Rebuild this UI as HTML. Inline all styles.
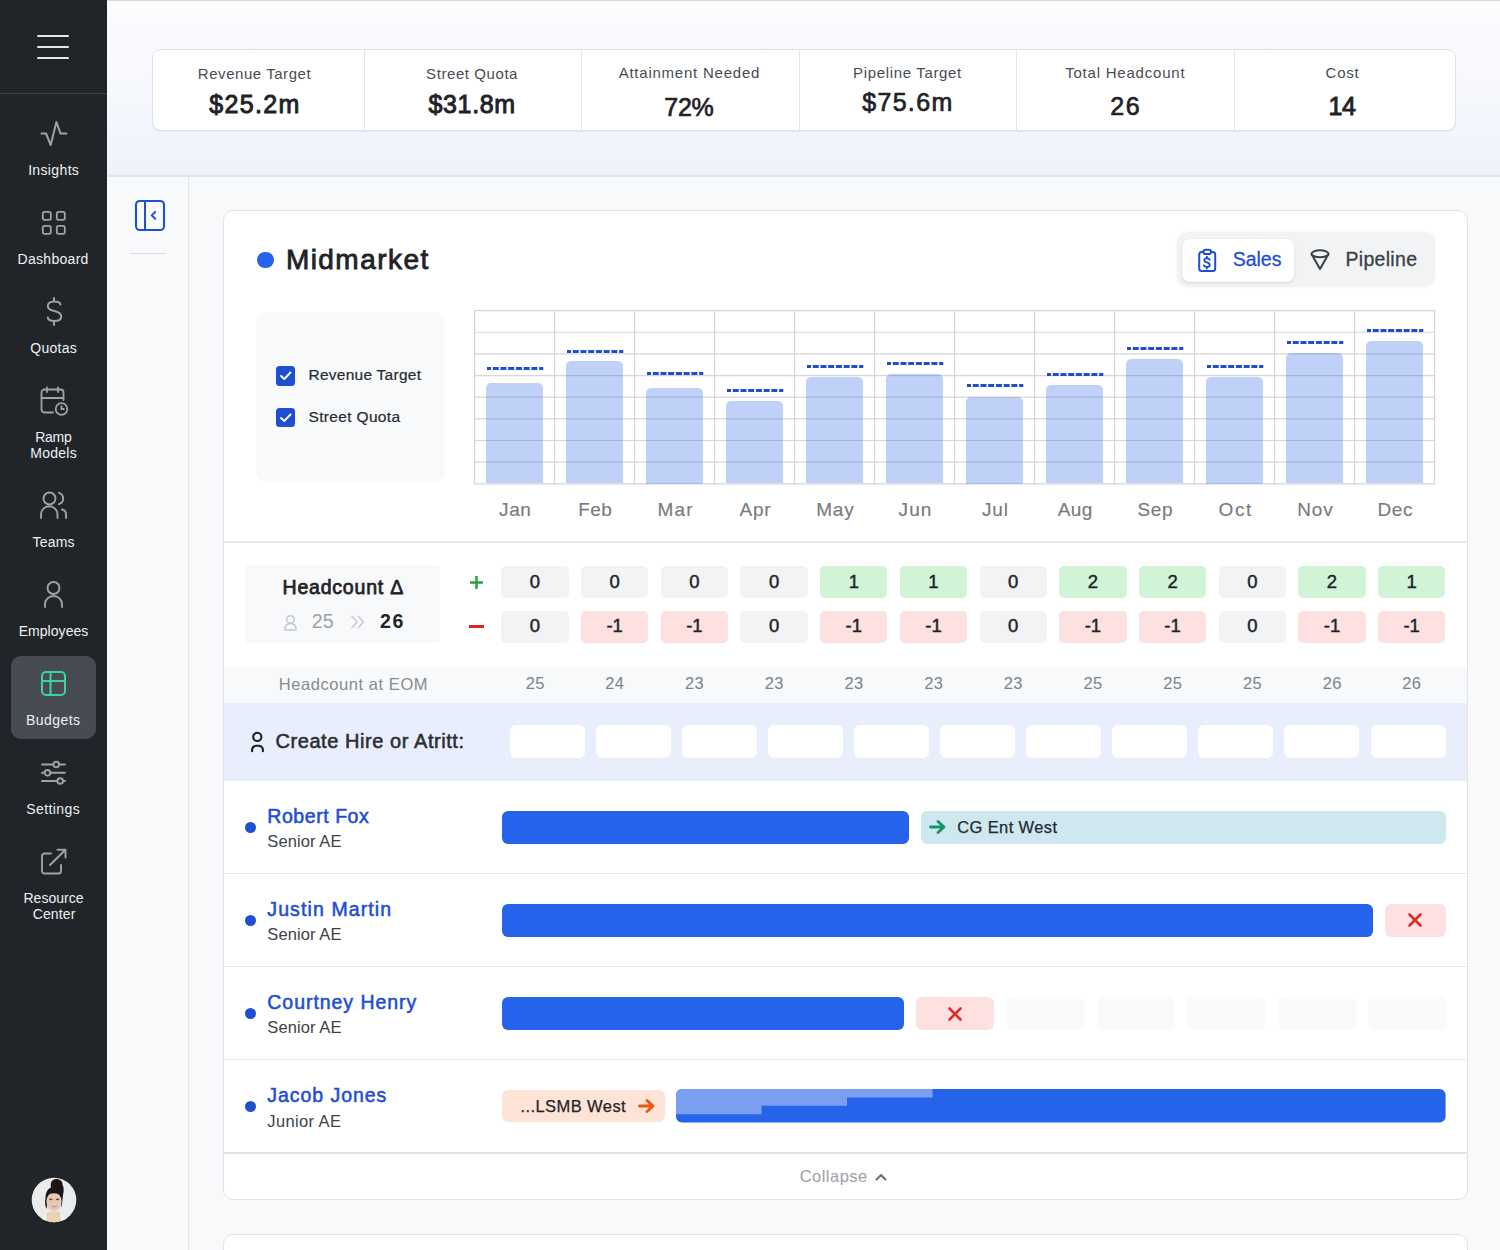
<!DOCTYPE html>
<html><head><meta charset="utf-8"><title>Budgets</title>
<style>
html,body{margin:0;padding:0;}
body{width:1500px;height:1250px;overflow:hidden;position:relative;background:#f8f9fa;font-family:"Liberation Sans",sans-serif;}
.t{position:absolute;line-height:1;white-space:nowrap;}
.r{position:absolute;}
.s{position:absolute;overflow:visible;}
</style></head><body>
<div class="r" style="left:0px;top:0px;width:107px;height:1250px;background:#212529;border-radius:0px;"></div>
<div class="r" style="left:0px;top:93px;width:107px;height:1px;background:#3a3f45;border-radius:0px;"></div>
<div class="r" style="left:37px;top:35px;width:32px;height:2.2px;background:#e4e6e8;border-radius:1px;"></div>
<div class="r" style="left:37px;top:46px;width:32px;height:2.2px;background:#e4e6e8;border-radius:1px;"></div>
<div class="r" style="left:37px;top:57px;width:32px;height:2.2px;background:#e4e6e8;border-radius:1px;"></div>
<svg class="s" style="left:39.5px;top:121px;" width="28" height="25" viewBox="0 0 28 25"><polyline points="1.5,12.5 6,12.5 10.7,24 16.4,1 20.5,12.5 26.5,12.5" fill="none" stroke="#9ea3a8" stroke-width="2" stroke-linejoin="round" stroke-linecap="round"/></svg>
<div class="t" style="left:-246.32px;width:600px;text-align:center;top:163.15px;font-size:14px;color:#eef0f2;letter-spacing:0.357px;">Insights</div>
<svg class="s" style="left:40.5px;top:209.5px;" width="26" height="26" viewBox="0 0 26 26"><rect x="1.8" y="1.8" width="8" height="8" rx="1.8" fill="none" stroke="#9ea3a8" stroke-width="1.8"/><rect x="1.8" y="15.8" width="8" height="8" rx="1.8" fill="none" stroke="#9ea3a8" stroke-width="1.8"/><rect x="15.8" y="1.8" width="8" height="8" rx="1.8" fill="none" stroke="#9ea3a8" stroke-width="1.8"/><rect x="15.8" y="15.8" width="8" height="8" rx="1.8" fill="none" stroke="#9ea3a8" stroke-width="1.8"/></svg>
<div class="t" style="left:-246.86px;width:600px;text-align:center;top:252.15px;font-size:14px;color:#eef0f2;letter-spacing:0.287px;">Dashboard</div>
<svg class="s" style="left:45.5px;top:296.5px;" width="17" height="29" viewBox="0 0 17 29"><path d="M8 1 V4.5 M8 24.2 V28 M14.5 7.5 C14 5 11.5 4.5 8.2 4.5 C4 4.5 1.8 6.5 1.8 9 C1.8 12.2 4.8 13.3 8.2 14 C12 14.8 15.2 16 15.2 19.5 C15.2 22.5 12.3 24 8.2 24 C4.8 24 2.2 23 1.8 20.5" fill="none" stroke="#9ea3a8" stroke-width="2" stroke-linecap="round"/></svg>
<div class="t" style="left:-246.36px;width:600px;text-align:center;top:340.65px;font-size:14px;color:#eef0f2;letter-spacing:0.28px;">Quotas</div>
<svg class="s" style="left:39.5px;top:386.5px;" width="30" height="30" viewBox="0 0 30 30"><path d="M13 25.5 H4.5 A3 3 0 0 1 1.5 22.5 V5.5 A3 3 0 0 1 4.5 2.5 H20.5 A3 3 0 0 1 23.5 5.5 V13" fill="none" stroke="#9ea3a8" stroke-width="1.8" stroke-linecap="round"/><path d="M1.5 11 H23.5 M7 0.5 V5 M18 0.5 V5" fill="none" stroke="#9ea3a8" stroke-width="1.8" stroke-linecap="round"/><circle cx="21.5" cy="22" r="5.8" fill="none" stroke="#9ea3a8" stroke-width="1.8"/><path d="M21.5 18.5 V22 H24.5" fill="none" stroke="#9ea3a8" stroke-width="1.8"/></svg>
<div class="t" style="left:-246.60px;width:600px;text-align:center;top:429.65px;font-size:14px;color:#eef0f2;letter-spacing:-0.2px;">Ramp</div>
<div class="t" style="left:-246.36px;width:600px;text-align:center;top:446.15px;font-size:14px;color:#eef0f2;letter-spacing:0.28px;">Models</div>
<svg class="s" style="left:40px;top:491px;" width="28" height="28" viewBox="0 0 28 28"><circle cx="9.5" cy="7.5" r="6" fill="none" stroke="#9ea3a8" stroke-width="1.9"/><path d="M19 1.8 A6 6 0 0 1 19 13.2" fill="none" stroke="#9ea3a8" stroke-width="1.9" stroke-linecap="round"/><path d="M1 27 V23.5 A8 8 0 0 1 17.5 23.5 V27" fill="none" stroke="#9ea3a8" stroke-width="1.9" stroke-linecap="round"/><path d="M22 18.5 A5 5 0 0 1 26 23.5 V27" fill="none" stroke="#9ea3a8" stroke-width="1.9" stroke-linecap="round"/></svg>
<div class="t" style="left:-246.41px;width:600px;text-align:center;top:535.15px;font-size:14px;color:#eef0f2;letter-spacing:0.175px;">Teams</div>
<svg class="s" style="left:43.5px;top:580.5px;" width="20" height="28" viewBox="0 0 20 28"><circle cx="9.5" cy="7" r="6" fill="none" stroke="#9ea3a8" stroke-width="1.9"/><path d="M1 26 V23 A8.5 8 0 0 1 18 23 V26" fill="none" stroke="#9ea3a8" stroke-width="1.9" stroke-linecap="round"/></svg>
<div class="t" style="left:-246.47px;width:600px;text-align:center;top:624.15px;font-size:14px;color:#eef0f2;letter-spacing:0.05px;">Employees</div>
<div class="r" style="left:11px;top:655.5px;width:85px;height:83.5px;background:#474c54;border-radius:10px;"></div>
<svg class="s" style="left:40.5px;top:670.5px;" width="25" height="25" viewBox="0 0 25 25"><rect x="1" y="1" width="23" height="23" rx="4" fill="none" stroke="#3dd39b" stroke-width="2"/><path d="M1 10 H24 M9.5 1 V24" fill="none" stroke="#3dd39b" stroke-width="2"/></svg>
<div class="t" style="left:-246.79px;width:600px;text-align:center;top:713.15px;font-size:14px;color:#eef0f2;letter-spacing:0.417px;">Budgets</div>
<svg class="s" style="left:41px;top:760.5px;" width="25" height="24" viewBox="0 0 25 24"><path d="M1 3.5 H24 M1 11.8 H24 M1 20 H24" stroke="#9ea3a8" stroke-width="1.9" stroke-linecap="round"/><circle cx="15.2" cy="3.5" r="2.8" fill="#212529" stroke="#9ea3a8" stroke-width="1.9"/><circle cx="6.5" cy="11.8" r="2.8" fill="#212529" stroke="#9ea3a8" stroke-width="1.9"/><circle cx="19.2" cy="20" r="2.8" fill="#212529" stroke="#9ea3a8" stroke-width="1.9"/></svg>
<div class="t" style="left:-246.81px;width:600px;text-align:center;top:801.65px;font-size:14px;color:#eef0f2;letter-spacing:0.386px;">Settings</div>
<svg class="s" style="left:40.5px;top:848.5px;" width="26" height="26" viewBox="0 0 26 26"><path d="M10 4.5 H3.5 A2.5 2.5 0 0 0 1 7 V22 A2.5 2.5 0 0 0 3.5 24.5 H17.5 A2.5 2.5 0 0 0 20 22 V16" fill="none" stroke="#9ea3a8" stroke-width="1.9" stroke-linecap="round"/><path d="M9 16 L24.5 0.8 M16.5 0.8 H24.5 V8.5" fill="none" stroke="#9ea3a8" stroke-width="1.9" stroke-linecap="round" stroke-linejoin="round"/></svg>
<div class="t" style="left:-246.49px;width:600px;text-align:center;top:891.15px;font-size:14px;color:#eef0f2;letter-spacing:0.029px;">Resource</div>
<div class="t" style="left:-245.94px;width:600px;text-align:center;top:907.15px;font-size:14px;color:#eef0f2;letter-spacing:0.12px;">Center</div>
<svg class="s" style="left:30.8px;top:1177.2px;" width="46" height="46" viewBox="0 0 46 46"><defs><clipPath id="av"><circle cx="23" cy="23" r="22.3"/></clipPath><filter id="bl" x="-10%" y="-10%" width="120%" height="120%"><feGaussianBlur stdDeviation="0.55"/></filter></defs><g clip-path="url(#av)"><rect width="46" height="46" fill="#eaebed"/><g filter="url(#bl)"><path d="M8 46 C10 40 15 37 23 37 C31 37 37 40 39 46 Z" fill="#f3f3f4"/><path d="M15 46 L15.5 36 C18 33.5 27 33.5 29.5 36 L30 46 Z" fill="#ecd2b4"/><path d="M14.5 24 C14 17 16 12 20 10.5 C19 6 21 2 25 2 C29 2 32 4.5 31.5 8 C33 10 33 14 32 18 C31.5 22 31 27 30.5 31 L29.5 22 C28 17 18 17 16.5 22 L15.5 31 C15 29 14.5 27 14.5 24 Z" fill="#1a1718"/><path d="M14 23 C14 27 14.5 30 15.5 32 L17 24 Z" fill="#2a2626"/><ellipse cx="23" cy="24.6" rx="7.6" ry="9.3" fill="#e6c8b4"/><path d="M15.5 19 C17 14.5 20 13.5 23 13.5 C27 13.5 30 15 30.8 19.5 C29 17 26 16.3 23 16.3 C20 16.3 17 17 15.5 19 Z" fill="#1a1718"/><ellipse cx="19.8" cy="22.3" rx="1.7" ry="0.9" fill="#6b4a3a"/><ellipse cx="26.6" cy="22.3" rx="1.7" ry="0.9" fill="#6b4a3a"/><path d="M20.5 29 C22 30 25 30 26.5 29" fill="none" stroke="#b98470" stroke-width="0.9"/></g></g></svg>
<div class="r" style="left:107px;top:0px;width:1393px;height:1250px;background:#f8f9fa;border-radius:0px;"></div>
<div class="r" style="left:107px;top:0px;width:1393px;height:175px;background:linear-gradient(180deg,#fcfcfe 0%,#f7f9fd 45%,#eef2fb 100%);border-radius:0px;"></div>
<div class="r" style="left:107px;top:0px;width:1393px;height:1px;background:#d9dbdd;border-radius:0px;"></div>
<div class="r" style="left:107px;top:175px;width:1393px;height:1.5px;background:#e2e6ee;border-radius:0px;"></div>
<div class="r" style="left:152px;top:49px;width:1304px;height:82px;background:#fff;border-radius:9px;border:1px solid #dfe1e5;box-sizing:border-box;box-shadow:0 1px 2px rgba(0,0,0,0.05);"></div>
<div class="r" style="left:364px;top:50px;width:1px;height:80px;background:#e3e5e8;border-radius:0px;"></div>
<div class="r" style="left:581px;top:50px;width:1px;height:80px;background:#e3e5e8;border-radius:0px;"></div>
<div class="r" style="left:799px;top:50px;width:1px;height:80px;background:#e3e5e8;border-radius:0px;"></div>
<div class="r" style="left:1016px;top:50px;width:1px;height:80px;background:#e3e5e8;border-radius:0px;"></div>
<div class="r" style="left:1234px;top:50px;width:1px;height:80px;background:#e3e5e8;border-radius:0px;"></div>
<div class="t" style="left:-45.53px;width:600px;text-align:center;top:65.70px;font-size:15px;color:#474c52;letter-spacing:0.546px;">Revenue Target</div>
<div class="t" style="left:-45.14px;width:600px;text-align:center;top:91.64px;font-size:25px;color:#1f2328;letter-spacing:1.32px;-webkit-text-stroke:0.95px #1f2328;">$25.2m</div>
<div class="t" style="left:172.09px;width:600px;text-align:center;top:65.70px;font-size:15px;color:#474c52;letter-spacing:0.573px;">Street Quota</div>
<div class="t" style="left:172.14px;width:600px;text-align:center;top:92.14px;font-size:25px;color:#1f2328;letter-spacing:0.68px;-webkit-text-stroke:0.95px #1f2328;">$31.8m</div>
<div class="t" style="left:389.38px;width:600px;text-align:center;top:64.90px;font-size:15px;color:#474c52;letter-spacing:0.769px;">Attainment Needed</div>
<div class="t" style="left:388.90px;width:600px;text-align:center;top:94.64px;font-size:25px;color:#1f2328;letter-spacing:-0.2px;-webkit-text-stroke:0.7px #1f2328;">72%</div>
<div class="t" style="left:607.53px;width:600px;text-align:center;top:64.70px;font-size:15px;color:#474c52;letter-spacing:0.657px;">Pipeline Target</div>
<div class="t" style="left:607.87px;width:600px;text-align:center;top:90.34px;font-size:25px;color:#1f2328;letter-spacing:1.34px;-webkit-text-stroke:0.7px #1f2328;">$75.6m</div>
<div class="t" style="left:825.29px;width:600px;text-align:center;top:64.70px;font-size:15px;color:#474c52;letter-spacing:0.786px;">Total Headcount</div>
<div class="t" style="left:825.70px;width:600px;text-align:center;top:93.94px;font-size:25px;color:#1f2328;letter-spacing:1.6px;-webkit-text-stroke:0.7px #1f2328;">26</div>
<div class="t" style="left:1042.58px;width:600px;text-align:center;top:64.90px;font-size:15px;color:#474c52;letter-spacing:0.767px;">Cost</div>
<div class="t" style="left:1042.10px;width:600px;text-align:center;top:93.84px;font-size:25px;color:#1f2328;letter-spacing:-0.2px;-webkit-text-stroke:0.95px #1f2328;">14</div>
<div class="r" style="left:188px;top:176px;width:1px;height:1074px;background:#e3e5e8;border-radius:0px;"></div>
<svg class="s" style="left:135px;top:200px;" width="30" height="31" viewBox="0 0 30 31"><rect x="1" y="1" width="28" height="29" rx="3.8" fill="none" stroke="#2050cc" stroke-width="2.1"/><path d="M10 1 V30" stroke="#2050cc" stroke-width="2"/><path d="M20.2 12 L16.7 15.4 L20.2 18.8" fill="none" stroke="#2050cc" stroke-width="2" stroke-linecap="round" stroke-linejoin="round"/></svg>
<div class="r" style="left:130px;top:253px;width:36px;height:1px;background:#dcdee1;border-radius:0px;"></div>
<div class="r" style="left:222.5px;top:210px;width:1245.5px;height:990px;background:#fff;border-radius:10px;border:1px solid #e1e3e6;box-sizing:border-box;"></div>
<div class="r" style="left:257px;top:251.5px;width:16.5px;height:16.5px;background:#2563eb;border-radius:9px;"></div>
<div class="t" style="left:285.90px;top:245.60px;font-size:28px;color:#1f2328;letter-spacing:1.45px;-webkit-text-stroke:0.85px #1f2328;">Midmarket</div>
<div class="r" style="left:1177px;top:232px;width:258px;height:55px;background:#f1f3f5;border-radius:10px;box-shadow:0 0 3px rgba(0,0,0,0.06);"></div>
<div class="r" style="left:1182px;top:239px;width:112px;height:43px;background:#fff;border-radius:8px;box-shadow:0 1px 3px rgba(0,0,0,0.12);"></div>
<svg class="s" style="left:1198px;top:247.5px;" width="19" height="25" viewBox="0 0 19 25"><rect x="1.2" y="4" width="16" height="19" rx="2.5" fill="none" stroke="#1f4fd0" stroke-width="2"/><rect x="5.5" y="1.8" width="7.5" height="4.2" rx="2.1" fill="#fff" stroke="#1f4fd0" stroke-width="2"/><path d="M11.6 11.8 C11.2 10.6 10.2 10.2 8.9 10.2 C7.4 10.2 6.3 11 6.3 12.2 C6.3 13.5 7.4 14 8.9 14.4 C10.6 14.9 11.7 15.5 11.7 16.9 C11.7 18.1 10.5 18.9 8.9 18.9 C7.4 18.9 6.3 18.3 5.9 17.3 M8.9 8.6 V10.2 M8.9 18.9 V20.5" fill="none" stroke="#1f4fd0" stroke-width="1.9" stroke-linecap="round"/></svg>
<div class="t" style="left:1232.80px;top:250.09px;font-size:19.5px;color:#1f4fd0;letter-spacing:-0.05px;-webkit-text-stroke:0.3px #1f4fd0;">Sales</div>
<svg class="s" style="left:1310px;top:249px;" width="20" height="22" viewBox="0 0 20 22"><ellipse cx="10" cy="4.8" rx="8.5" ry="3.5" fill="none" stroke="#3a3f44" stroke-width="2"/><path d="M1.5 5 L10 20 L18.5 5" fill="none" stroke="#3a3f44" stroke-width="2" stroke-linejoin="round"/></svg>
<div class="t" style="left:1345.50px;top:249.69px;font-size:19.5px;color:#3a3f44;letter-spacing:0.3px;-webkit-text-stroke:0.3px #3a3f44;">Pipeline</div>
<div class="r" style="left:255.5px;top:312px;width:188.5px;height:169.5px;background:#f8f9fb;border-radius:10px;"></div>
<div class="r" style="left:275.5px;top:366px;width:19.5px;height:19.5px;background:#1f4fd0;border-radius:3.5px;"></div>
<svg class="s" style="left:275.5px;top:366px;" width="19.5" height="19.5" viewBox="0 0 19.5 19.5"><path d="M5 10 L8.3 13 L14.5 6.5" fill="none" stroke="#fff" stroke-width="1.9" stroke-linecap="round" stroke-linejoin="round"/></svg>
<div class="r" style="left:275.5px;top:407.5px;width:19.5px;height:19.5px;background:#1f4fd0;border-radius:3.5px;"></div>
<svg class="s" style="left:275.5px;top:407.5px;" width="19.5" height="19.5" viewBox="0 0 19.5 19.5"><path d="M5 10 L8.3 13 L14.5 6.5" fill="none" stroke="#fff" stroke-width="1.9" stroke-linecap="round" stroke-linejoin="round"/></svg>
<div class="t" style="left:308.50px;top:367.08px;font-size:15.5px;color:#25292e;letter-spacing:0.254px;-webkit-text-stroke:0.2px #25292e;">Revenue Target</div>
<div class="t" style="left:308.50px;top:409.08px;font-size:15.5px;color:#25292e;letter-spacing:0.336px;-webkit-text-stroke:0.2px #25292e;">Street Quota</div>
<svg class="s" style="left:474px;top:309.6px;" width="962" height="175" viewBox="0 0 962 175"><line x1="0.6" y1="0" x2="0.6" y2="174" stroke="#d3d5d8" stroke-width="1.2"/><line x1="80.6" y1="0" x2="80.6" y2="174" stroke="#d3d5d8" stroke-width="1.2"/><line x1="160.6" y1="0" x2="160.6" y2="174" stroke="#d3d5d8" stroke-width="1.2"/><line x1="240.6" y1="0" x2="240.6" y2="174" stroke="#d3d5d8" stroke-width="1.2"/><line x1="320.6" y1="0" x2="320.6" y2="174" stroke="#d3d5d8" stroke-width="1.2"/><line x1="400.6" y1="0" x2="400.6" y2="174" stroke="#d3d5d8" stroke-width="1.2"/><line x1="480.6" y1="0" x2="480.6" y2="174" stroke="#d3d5d8" stroke-width="1.2"/><line x1="560.6" y1="0" x2="560.6" y2="174" stroke="#d3d5d8" stroke-width="1.2"/><line x1="640.6" y1="0" x2="640.6" y2="174" stroke="#d3d5d8" stroke-width="1.2"/><line x1="720.6" y1="0" x2="720.6" y2="174" stroke="#d3d5d8" stroke-width="1.2"/><line x1="800.6" y1="0" x2="800.6" y2="174" stroke="#d3d5d8" stroke-width="1.2"/><line x1="880.6" y1="0" x2="880.6" y2="174" stroke="#d3d5d8" stroke-width="1.2"/><line x1="960.6" y1="0" x2="960.6" y2="174" stroke="#d3d5d8" stroke-width="1.2"/><line x1="0" y1="0.60" x2="961.2" y2="0.60" stroke="#d3d5d8" stroke-width="1.2"/><line x1="0" y1="22.25" x2="961.2" y2="22.25" stroke="#d3d5d8" stroke-width="1.2"/><line x1="0" y1="43.90" x2="961.2" y2="43.90" stroke="#d3d5d8" stroke-width="1.2"/><line x1="0" y1="65.55" x2="961.2" y2="65.55" stroke="#d3d5d8" stroke-width="1.2"/><line x1="0" y1="87.20" x2="961.2" y2="87.20" stroke="#d3d5d8" stroke-width="1.2"/><line x1="0" y1="108.85" x2="961.2" y2="108.85" stroke="#d3d5d8" stroke-width="1.2"/><line x1="0" y1="130.50" x2="961.2" y2="130.50" stroke="#d3d5d8" stroke-width="1.2"/><line x1="0" y1="152.15" x2="961.2" y2="152.15" stroke="#d3d5d8" stroke-width="1.2"/><line x1="0" y1="173.80" x2="961.2" y2="173.80" stroke="#d3d5d8" stroke-width="1.2"/></svg>
<div class="r" style="left:486.3px;top:383.4px;width:57px;height:100.10000000000002px;background:rgba(70,120,235,0.34);border-radius:0px;border-radius:5px 5px 0 0;"></div>
<svg class="s" style="left:487px;top:366.5px;" width="58" height="3" viewBox="0 0 58 3"><line x1="0" y1="1.5" x2="56.3" y2="1.5" stroke="#1f4fd0" stroke-width="2.9" stroke-dasharray="6 1.73" stroke-dashoffset="2"/></svg>
<div class="t" style="left:215.30px;width:600px;text-align:center;top:500.42px;font-size:19px;color:#767b80;letter-spacing:0.6px;-webkit-text-stroke:0.15px #767b80;">Jan</div>
<div class="r" style="left:566.3px;top:361.2px;width:57px;height:122.30000000000001px;background:rgba(70,120,235,0.34);border-radius:0px;border-radius:5px 5px 0 0;"></div>
<svg class="s" style="left:567px;top:349.7px;" width="58" height="3" viewBox="0 0 58 3"><line x1="0" y1="1.5" x2="56.3" y2="1.5" stroke="#1f4fd0" stroke-width="2.9" stroke-dasharray="6 1.73" stroke-dashoffset="2"/></svg>
<div class="t" style="left:295.18px;width:600px;text-align:center;top:500.42px;font-size:19px;color:#767b80;letter-spacing:0.35px;-webkit-text-stroke:0.15px #767b80;">Feb</div>
<div class="r" style="left:646.3px;top:388px;width:57px;height:95.5px;background:rgba(70,120,235,0.34);border-radius:0px;border-radius:5px 5px 0 0;"></div>
<svg class="s" style="left:647px;top:372.0px;" width="58" height="3" viewBox="0 0 58 3"><line x1="0" y1="1.5" x2="56.3" y2="1.5" stroke="#1f4fd0" stroke-width="2.9" stroke-dasharray="6 1.73" stroke-dashoffset="2"/></svg>
<div class="t" style="left:375.57px;width:600px;text-align:center;top:500.42px;font-size:19px;color:#767b80;letter-spacing:1.15px;-webkit-text-stroke:0.15px #767b80;">Mar</div>
<div class="r" style="left:726.3px;top:400.6px;width:57px;height:82.89999999999998px;background:rgba(70,120,235,0.34);border-radius:0px;border-radius:5px 5px 0 0;"></div>
<svg class="s" style="left:727px;top:388.7px;" width="58" height="3" viewBox="0 0 58 3"><line x1="0" y1="1.5" x2="56.3" y2="1.5" stroke="#1f4fd0" stroke-width="2.9" stroke-dasharray="6 1.73" stroke-dashoffset="2"/></svg>
<div class="t" style="left:455.40px;width:600px;text-align:center;top:500.42px;font-size:19px;color:#767b80;letter-spacing:0.8px;-webkit-text-stroke:0.15px #767b80;">Apr</div>
<div class="r" style="left:806.3px;top:377.3px;width:57px;height:106.19999999999999px;background:rgba(70,120,235,0.34);border-radius:0px;border-radius:5px 5px 0 0;"></div>
<svg class="s" style="left:807px;top:364.6px;" width="58" height="3" viewBox="0 0 58 3"><line x1="0" y1="1.5" x2="56.3" y2="1.5" stroke="#1f4fd0" stroke-width="2.9" stroke-dasharray="6 1.73" stroke-dashoffset="2"/></svg>
<div class="t" style="left:535.35px;width:600px;text-align:center;top:500.42px;font-size:19px;color:#767b80;letter-spacing:0.7px;-webkit-text-stroke:0.15px #767b80;">May</div>
<div class="r" style="left:886.3px;top:374.1px;width:57px;height:109.39999999999998px;background:rgba(70,120,235,0.34);border-radius:0px;border-radius:5px 5px 0 0;"></div>
<svg class="s" style="left:887px;top:362.0px;" width="58" height="3" viewBox="0 0 58 3"><line x1="0" y1="1.5" x2="56.3" y2="1.5" stroke="#1f4fd0" stroke-width="2.9" stroke-dasharray="6 1.73" stroke-dashoffset="2"/></svg>
<div class="t" style="left:615.55px;width:600px;text-align:center;top:500.42px;font-size:19px;color:#767b80;letter-spacing:1.1px;-webkit-text-stroke:0.15px #767b80;">Jun</div>
<div class="r" style="left:966.3px;top:396.5px;width:57px;height:87.0px;background:rgba(70,120,235,0.34);border-radius:0px;border-radius:5px 5px 0 0;"></div>
<svg class="s" style="left:967px;top:384.4px;" width="58" height="3" viewBox="0 0 58 3"><line x1="0" y1="1.5" x2="56.3" y2="1.5" stroke="#1f4fd0" stroke-width="2.9" stroke-dasharray="6 1.73" stroke-dashoffset="2"/></svg>
<div class="t" style="left:695.48px;width:600px;text-align:center;top:500.42px;font-size:19px;color:#767b80;letter-spacing:0.95px;-webkit-text-stroke:0.15px #767b80;">Jul</div>
<div class="r" style="left:1046.3px;top:385.3px;width:57px;height:98.19999999999999px;background:rgba(70,120,235,0.34);border-radius:0px;border-radius:5px 5px 0 0;"></div>
<svg class="s" style="left:1047px;top:373.2px;" width="58" height="3" viewBox="0 0 58 3"><line x1="0" y1="1.5" x2="56.3" y2="1.5" stroke="#1f4fd0" stroke-width="2.9" stroke-dasharray="6 1.73" stroke-dashoffset="2"/></svg>
<div class="t" style="left:775.23px;width:600px;text-align:center;top:500.42px;font-size:19px;color:#767b80;letter-spacing:0.45px;-webkit-text-stroke:0.15px #767b80;">Aug</div>
<div class="r" style="left:1126.3px;top:358.8px;width:57px;height:124.69999999999999px;background:rgba(70,120,235,0.34);border-radius:0px;border-radius:5px 5px 0 0;"></div>
<svg class="s" style="left:1127px;top:346.9px;" width="58" height="3" viewBox="0 0 58 3"><line x1="0" y1="1.5" x2="56.3" y2="1.5" stroke="#1f4fd0" stroke-width="2.9" stroke-dasharray="6 1.73" stroke-dashoffset="2"/></svg>
<div class="t" style="left:855.30px;width:600px;text-align:center;top:500.42px;font-size:19px;color:#767b80;letter-spacing:0.6px;-webkit-text-stroke:0.15px #767b80;">Sep</div>
<div class="r" style="left:1206.3px;top:377px;width:57px;height:106.5px;background:rgba(70,120,235,0.34);border-radius:0px;border-radius:5px 5px 0 0;"></div>
<svg class="s" style="left:1207px;top:365.1px;" width="58" height="3" viewBox="0 0 58 3"><line x1="0" y1="1.5" x2="56.3" y2="1.5" stroke="#1f4fd0" stroke-width="2.9" stroke-dasharray="6 1.73" stroke-dashoffset="2"/></svg>
<div class="t" style="left:935.80px;width:600px;text-align:center;top:500.42px;font-size:19px;color:#767b80;letter-spacing:1.6px;-webkit-text-stroke:0.15px #767b80;">Oct</div>
<div class="r" style="left:1286.3px;top:353.2px;width:57px;height:130.3px;background:rgba(70,120,235,0.34);border-radius:0px;border-radius:5px 5px 0 0;"></div>
<svg class="s" style="left:1287px;top:341.3px;" width="58" height="3" viewBox="0 0 58 3"><line x1="0" y1="1.5" x2="56.3" y2="1.5" stroke="#1f4fd0" stroke-width="2.9" stroke-dasharray="6 1.73" stroke-dashoffset="2"/></svg>
<div class="t" style="left:1015.38px;width:600px;text-align:center;top:500.42px;font-size:19px;color:#767b80;letter-spacing:0.75px;-webkit-text-stroke:0.15px #767b80;">Nov</div>
<div class="r" style="left:1366.3px;top:341.2px;width:57px;height:142.3px;background:rgba(70,120,235,0.34);border-radius:0px;border-radius:5px 5px 0 0;"></div>
<svg class="s" style="left:1367px;top:328.7px;" width="58" height="3" viewBox="0 0 58 3"><line x1="0" y1="1.5" x2="56.3" y2="1.5" stroke="#1f4fd0" stroke-width="2.9" stroke-dasharray="6 1.73" stroke-dashoffset="2"/></svg>
<div class="t" style="left:1095.30px;width:600px;text-align:center;top:500.42px;font-size:19px;color:#767b80;letter-spacing:0.6px;-webkit-text-stroke:0.15px #767b80;">Dec</div>
<div class="r" style="left:224px;top:541px;width:1243px;height:1.5px;background:#e6e8ea;border-radius:0px;"></div>
<div class="r" style="left:244.5px;top:564.5px;width:195.5px;height:78.5px;background:#f8f9fa;border-radius:4px;"></div>
<div class="t" style="left:282.50px;top:577.89px;font-size:19.5px;color:#1f2328;letter-spacing:0.8px;-webkit-text-stroke:0.75px #1f2328;">Headcount Δ</div>
<svg class="s" style="left:283.5px;top:614.5px;" width="14" height="16" viewBox="0 0 14 16"><circle cx="6.5" cy="4.5" r="3.8" fill="none" stroke="#c5c9cd" stroke-width="1.6"/><path d="M1 15 V13.5 A5.5 5 0 0 1 12 13.5 V15 Z" fill="none" stroke="#c5c9cd" stroke-width="1.6" stroke-linejoin="round"/></svg>
<div class="t" style="left:311.80px;top:612.49px;font-size:19.5px;color:#9da2a7;letter-spacing:0.1px;">25</div>
<svg class="s" style="left:350.5px;top:615px;" width="14" height="14" viewBox="0 0 14 14"><path d="M1 1.5 L6 7 L1 12.5 M7.5 1.5 L12.5 7 L7.5 12.5" fill="none" stroke="#c8cbcf" stroke-width="1.6" stroke-linecap="round" stroke-linejoin="round"/></svg>
<div class="t" style="left:380.00px;top:612.49px;font-size:19.5px;color:#1f2328;font-weight:700;letter-spacing:1.6px;">26</div>
<svg class="s" style="left:469px;top:575px;" width="15" height="15" viewBox="0 0 15 15"><path d="M7.5 1 V14 M1 7.5 H14" stroke="#2ea043" stroke-width="2.5"/></svg>
<div class="r" style="left:469px;top:625px;width:15px;height:2.6px;background:#dc2626;border-radius:0px;"></div>
<div class="r" style="left:501.3px;top:566.3px;width:67.4px;height:31.5px;background:#f1f3f4;border-radius:5px;"></div>
<div class="t" style="left:235.00px;width:600px;text-align:center;top:572.84px;font-size:18.5px;color:#1f2328;-webkit-text-stroke:0.45px #1f2328;">0</div>
<div class="r" style="left:501.3px;top:610.5px;width:67.4px;height:32px;background:#f1f3f4;border-radius:5px;"></div>
<div class="t" style="left:235.00px;width:600px;text-align:center;top:617.34px;font-size:18.5px;color:#1f2328;-webkit-text-stroke:0.45px #1f2328;">0</div>
<div class="r" style="left:581.0px;top:566.3px;width:67.4px;height:31.5px;background:#f1f3f4;border-radius:5px;"></div>
<div class="t" style="left:314.70px;width:600px;text-align:center;top:572.84px;font-size:18.5px;color:#1f2328;-webkit-text-stroke:0.45px #1f2328;">0</div>
<div class="r" style="left:581.0px;top:610.5px;width:67.4px;height:32px;background:#fde1e1;border-radius:5px;"></div>
<div class="t" style="left:314.70px;width:600px;text-align:center;top:617.34px;font-size:18.5px;color:#1f2328;-webkit-text-stroke:0.45px #1f2328;">-1</div>
<div class="r" style="left:660.7px;top:566.3px;width:67.4px;height:31.5px;background:#f1f3f4;border-radius:5px;"></div>
<div class="t" style="left:394.40px;width:600px;text-align:center;top:572.84px;font-size:18.5px;color:#1f2328;-webkit-text-stroke:0.45px #1f2328;">0</div>
<div class="r" style="left:660.7px;top:610.5px;width:67.4px;height:32px;background:#fde1e1;border-radius:5px;"></div>
<div class="t" style="left:394.40px;width:600px;text-align:center;top:617.34px;font-size:18.5px;color:#1f2328;-webkit-text-stroke:0.45px #1f2328;">-1</div>
<div class="r" style="left:740.4px;top:566.3px;width:67.4px;height:31.5px;background:#f1f3f4;border-radius:5px;"></div>
<div class="t" style="left:474.10px;width:600px;text-align:center;top:572.84px;font-size:18.5px;color:#1f2328;-webkit-text-stroke:0.45px #1f2328;">0</div>
<div class="r" style="left:740.4px;top:610.5px;width:67.4px;height:32px;background:#f1f3f4;border-radius:5px;"></div>
<div class="t" style="left:474.10px;width:600px;text-align:center;top:617.34px;font-size:18.5px;color:#1f2328;-webkit-text-stroke:0.45px #1f2328;">0</div>
<div class="r" style="left:820.1px;top:566.3px;width:67.4px;height:31.5px;background:#d2f4d6;border-radius:5px;"></div>
<div class="t" style="left:553.80px;width:600px;text-align:center;top:572.84px;font-size:18.5px;color:#1f2328;-webkit-text-stroke:0.45px #1f2328;">1</div>
<div class="r" style="left:820.1px;top:610.5px;width:67.4px;height:32px;background:#fde1e1;border-radius:5px;"></div>
<div class="t" style="left:553.80px;width:600px;text-align:center;top:617.34px;font-size:18.5px;color:#1f2328;-webkit-text-stroke:0.45px #1f2328;">-1</div>
<div class="r" style="left:899.8px;top:566.3px;width:67.4px;height:31.5px;background:#d2f4d6;border-radius:5px;"></div>
<div class="t" style="left:633.50px;width:600px;text-align:center;top:572.84px;font-size:18.5px;color:#1f2328;-webkit-text-stroke:0.45px #1f2328;">1</div>
<div class="r" style="left:899.8px;top:610.5px;width:67.4px;height:32px;background:#fde1e1;border-radius:5px;"></div>
<div class="t" style="left:633.50px;width:600px;text-align:center;top:617.34px;font-size:18.5px;color:#1f2328;-webkit-text-stroke:0.45px #1f2328;">-1</div>
<div class="r" style="left:979.5px;top:566.3px;width:67.4px;height:31.5px;background:#f1f3f4;border-radius:5px;"></div>
<div class="t" style="left:713.20px;width:600px;text-align:center;top:572.84px;font-size:18.5px;color:#1f2328;-webkit-text-stroke:0.45px #1f2328;">0</div>
<div class="r" style="left:979.5px;top:610.5px;width:67.4px;height:32px;background:#f1f3f4;border-radius:5px;"></div>
<div class="t" style="left:713.20px;width:600px;text-align:center;top:617.34px;font-size:18.5px;color:#1f2328;-webkit-text-stroke:0.45px #1f2328;">0</div>
<div class="r" style="left:1059.2px;top:566.3px;width:67.4px;height:31.5px;background:#d2f4d6;border-radius:5px;"></div>
<div class="t" style="left:792.90px;width:600px;text-align:center;top:572.84px;font-size:18.5px;color:#1f2328;-webkit-text-stroke:0.45px #1f2328;">2</div>
<div class="r" style="left:1059.2px;top:610.5px;width:67.4px;height:32px;background:#fde1e1;border-radius:5px;"></div>
<div class="t" style="left:792.90px;width:600px;text-align:center;top:617.34px;font-size:18.5px;color:#1f2328;-webkit-text-stroke:0.45px #1f2328;">-1</div>
<div class="r" style="left:1138.9px;top:566.3px;width:67.4px;height:31.5px;background:#d2f4d6;border-radius:5px;"></div>
<div class="t" style="left:872.60px;width:600px;text-align:center;top:572.84px;font-size:18.5px;color:#1f2328;-webkit-text-stroke:0.45px #1f2328;">2</div>
<div class="r" style="left:1138.9px;top:610.5px;width:67.4px;height:32px;background:#fde1e1;border-radius:5px;"></div>
<div class="t" style="left:872.60px;width:600px;text-align:center;top:617.34px;font-size:18.5px;color:#1f2328;-webkit-text-stroke:0.45px #1f2328;">-1</div>
<div class="r" style="left:1218.6px;top:566.3px;width:67.4px;height:31.5px;background:#f1f3f4;border-radius:5px;"></div>
<div class="t" style="left:952.30px;width:600px;text-align:center;top:572.84px;font-size:18.5px;color:#1f2328;-webkit-text-stroke:0.45px #1f2328;">0</div>
<div class="r" style="left:1218.6px;top:610.5px;width:67.4px;height:32px;background:#f1f3f4;border-radius:5px;"></div>
<div class="t" style="left:952.30px;width:600px;text-align:center;top:617.34px;font-size:18.5px;color:#1f2328;-webkit-text-stroke:0.45px #1f2328;">0</div>
<div class="r" style="left:1298.3px;top:566.3px;width:67.4px;height:31.5px;background:#d2f4d6;border-radius:5px;"></div>
<div class="t" style="left:1032.00px;width:600px;text-align:center;top:572.84px;font-size:18.5px;color:#1f2328;-webkit-text-stroke:0.45px #1f2328;">2</div>
<div class="r" style="left:1298.3px;top:610.5px;width:67.4px;height:32px;background:#fde1e1;border-radius:5px;"></div>
<div class="t" style="left:1032.00px;width:600px;text-align:center;top:617.34px;font-size:18.5px;color:#1f2328;-webkit-text-stroke:0.45px #1f2328;">-1</div>
<div class="r" style="left:1378.0px;top:566.3px;width:67.4px;height:31.5px;background:#d2f4d6;border-radius:5px;"></div>
<div class="t" style="left:1111.70px;width:600px;text-align:center;top:572.84px;font-size:18.5px;color:#1f2328;-webkit-text-stroke:0.45px #1f2328;">1</div>
<div class="r" style="left:1378.0px;top:610.5px;width:67.4px;height:32px;background:#fde1e1;border-radius:5px;"></div>
<div class="t" style="left:1111.70px;width:600px;text-align:center;top:617.34px;font-size:18.5px;color:#1f2328;-webkit-text-stroke:0.45px #1f2328;">-1</div>
<div class="r" style="left:224px;top:667px;width:1243px;height:36px;background:#f8f9fb;border-radius:0px;"></div>
<div class="t" style="left:278.80px;top:676.23px;font-size:16.5px;color:#878c91;letter-spacing:0.56px;">Headcount at EOM</div>
<div class="t" style="left:235.15px;width:600px;text-align:center;top:675.33px;font-size:16.5px;color:#7d8287;letter-spacing:0.3px;">25</div>
<div class="t" style="left:314.85px;width:600px;text-align:center;top:675.33px;font-size:16.5px;color:#7d8287;letter-spacing:0.3px;">24</div>
<div class="t" style="left:394.55px;width:600px;text-align:center;top:675.33px;font-size:16.5px;color:#7d8287;letter-spacing:0.3px;">23</div>
<div class="t" style="left:474.25px;width:600px;text-align:center;top:675.33px;font-size:16.5px;color:#7d8287;letter-spacing:0.3px;">23</div>
<div class="t" style="left:553.95px;width:600px;text-align:center;top:675.33px;font-size:16.5px;color:#7d8287;letter-spacing:0.3px;">23</div>
<div class="t" style="left:633.65px;width:600px;text-align:center;top:675.33px;font-size:16.5px;color:#7d8287;letter-spacing:0.3px;">23</div>
<div class="t" style="left:713.35px;width:600px;text-align:center;top:675.33px;font-size:16.5px;color:#7d8287;letter-spacing:0.3px;">23</div>
<div class="t" style="left:793.05px;width:600px;text-align:center;top:675.33px;font-size:16.5px;color:#7d8287;letter-spacing:0.3px;">25</div>
<div class="t" style="left:872.75px;width:600px;text-align:center;top:675.33px;font-size:16.5px;color:#7d8287;letter-spacing:0.3px;">25</div>
<div class="t" style="left:952.45px;width:600px;text-align:center;top:675.33px;font-size:16.5px;color:#7d8287;letter-spacing:0.3px;">25</div>
<div class="t" style="left:1032.15px;width:600px;text-align:center;top:675.33px;font-size:16.5px;color:#7d8287;letter-spacing:0.3px;">26</div>
<div class="t" style="left:1111.85px;width:600px;text-align:center;top:675.33px;font-size:16.5px;color:#7d8287;letter-spacing:0.3px;">26</div>
<div class="r" style="left:224px;top:703px;width:1243px;height:77.5px;background:#e8eefb;border-radius:0px;"></div>
<svg class="s" style="left:248.5px;top:731.5px;" width="17" height="21" viewBox="0 0 17 21"><circle cx="8.3" cy="4.9" r="4.1" fill="none" stroke="#1c1f24" stroke-width="2.1"/><path d="M3.1 19.2 V17.7 A4.5 4.5 0 0 1 7.6 13.7 H9.4 A4.5 4.5 0 0 1 13.9 17.7 V19.2" fill="none" stroke="#1c1f24" stroke-width="2.1" stroke-linecap="round"/></svg>
<div class="t" style="left:275.50px;top:731.47px;font-size:20px;color:#2a2e33;letter-spacing:0.562px;-webkit-text-stroke:0.55px #2a2e33;">Create Hire or Atritt:</div>
<div class="r" style="left:510.0px;top:724.7px;width:75px;height:33px;background:#fff;border-radius:6px;"></div>
<div class="r" style="left:596.05px;top:724.7px;width:75px;height:33px;background:#fff;border-radius:6px;"></div>
<div class="r" style="left:682.1px;top:724.7px;width:75px;height:33px;background:#fff;border-radius:6px;"></div>
<div class="r" style="left:768.15px;top:724.7px;width:75px;height:33px;background:#fff;border-radius:6px;"></div>
<div class="r" style="left:854.2px;top:724.7px;width:75px;height:33px;background:#fff;border-radius:6px;"></div>
<div class="r" style="left:940.25px;top:724.7px;width:75px;height:33px;background:#fff;border-radius:6px;"></div>
<div class="r" style="left:1026.3px;top:724.7px;width:75px;height:33px;background:#fff;border-radius:6px;"></div>
<div class="r" style="left:1112.35px;top:724.7px;width:75px;height:33px;background:#fff;border-radius:6px;"></div>
<div class="r" style="left:1198.4px;top:724.7px;width:75px;height:33px;background:#fff;border-radius:6px;"></div>
<div class="r" style="left:1284.4499999999998px;top:724.7px;width:75px;height:33px;background:#fff;border-radius:6px;"></div>
<div class="r" style="left:1370.5px;top:724.7px;width:75px;height:33px;background:#fff;border-radius:6px;"></div>
<div class="r" style="left:244.5px;top:821.5px;width:11px;height:11px;background:#1f4fd0;border-radius:6px;"></div>
<div class="t" style="left:267.30px;top:806.99px;font-size:19.5px;color:#1f4fd0;letter-spacing:0.556px;-webkit-text-stroke:0.55px #1f4fd0;">Robert Fox</div>
<div class="t" style="left:267.30px;top:833.33px;font-size:16.5px;color:#3d4247;letter-spacing:0.1px;">Senior AE</div>
<div class="r" style="left:244.5px;top:914.5px;width:11px;height:11px;background:#1f4fd0;border-radius:6px;"></div>
<div class="t" style="left:267.30px;top:899.99px;font-size:19.5px;color:#1f4fd0;letter-spacing:1.108px;-webkit-text-stroke:0.55px #1f4fd0;">Justin Martin</div>
<div class="t" style="left:267.30px;top:926.33px;font-size:16.5px;color:#3d4247;letter-spacing:0.1px;">Senior AE</div>
<div class="r" style="left:244.5px;top:1007.5px;width:11px;height:11px;background:#1f4fd0;border-radius:6px;"></div>
<div class="t" style="left:267.30px;top:992.99px;font-size:19.5px;color:#1f4fd0;letter-spacing:0.954px;-webkit-text-stroke:0.55px #1f4fd0;">Courtney Henry</div>
<div class="t" style="left:267.30px;top:1019.33px;font-size:16.5px;color:#3d4247;letter-spacing:0.1px;">Senior AE</div>
<div class="r" style="left:244.5px;top:1100.9px;width:11px;height:11px;background:#1f4fd0;border-radius:6px;"></div>
<div class="t" style="left:267.30px;top:1086.39px;font-size:19.5px;color:#1f4fd0;letter-spacing:0.95px;-webkit-text-stroke:0.55px #1f4fd0;">Jacob Jones</div>
<div class="t" style="left:267.30px;top:1112.73px;font-size:16.5px;color:#3d4247;letter-spacing:0.375px;">Junior AE</div>
<div class="r" style="left:224px;top:872.5px;width:1243px;height:1.5px;background:#e6e8ea;border-radius:0px;"></div>
<div class="r" style="left:224px;top:965.8px;width:1243px;height:1.5px;background:#e6e8ea;border-radius:0px;"></div>
<div class="r" style="left:224px;top:1058.8px;width:1243px;height:1.5px;background:#e6e8ea;border-radius:0px;"></div>
<div class="r" style="left:501.6px;top:810.5px;width:407.8px;height:33px;background:#2563eb;border-radius:6px;"></div>
<div class="r" style="left:921px;top:810.5px;width:525px;height:33px;background:#cfe7ee;border-radius:6px;"></div>
<svg class="s" style="left:929px;top:819.8px;" width="17" height="14" viewBox="0 0 17 14"><path d="M1.5 7 H15 M9 1.5 L15 7 L9 12.5" fill="none" stroke="#18946a" stroke-width="2.9" stroke-linecap="round" stroke-linejoin="round"/></svg>
<div class="t" style="left:957.30px;top:818.83px;font-size:16.5px;color:#1f2a33;letter-spacing:0.37px;-webkit-text-stroke:0.25px #1f2a33;">CG Ent West</div>
<div class="r" style="left:501.6px;top:903.5px;width:871.6px;height:33.2px;background:#2563eb;border-radius:6px;"></div>
<div class="r" style="left:1385.3px;top:903.5px;width:60.7px;height:33.2px;background:#fde1e1;border-radius:6px;"></div>
<svg class="s" style="left:1408.2px;top:912.8px;" width="14" height="14" viewBox="0 0 14 14"><path d="M1.5 1.5 L12.5 12.5 M12.5 1.5 L1.5 12.5" stroke="#d92d2d" stroke-width="2.6" stroke-linecap="round"/></svg>
<div class="r" style="left:501.6px;top:997px;width:402px;height:32.6px;background:#2563eb;border-radius:6px;"></div>
<div class="r" style="left:915.6px;top:997px;width:78.4px;height:32.6px;background:#fde1e1;border-radius:6px;"></div>
<svg class="s" style="left:947.8px;top:1006.5px;" width="14" height="14" viewBox="0 0 14 14"><path d="M1.5 1.5 L12.5 12.5 M12.5 1.5 L1.5 12.5" stroke="#d92d2d" stroke-width="2.6" stroke-linecap="round"/></svg>
<div class="r" style="left:1006.0px;top:997px;width:78.4px;height:32.6px;background:#f9fafb;border-radius:6px;"></div>
<div class="r" style="left:1096.5px;top:997px;width:78.4px;height:32.6px;background:#f9fafb;border-radius:6px;"></div>
<div class="r" style="left:1187.0px;top:997px;width:78.4px;height:32.6px;background:#f9fafb;border-radius:6px;"></div>
<div class="r" style="left:1277.5px;top:997px;width:78.4px;height:32.6px;background:#f9fafb;border-radius:6px;"></div>
<div class="r" style="left:1368.0px;top:997px;width:78.4px;height:32.6px;background:#f9fafb;border-radius:6px;"></div>
<div class="r" style="left:502px;top:1090px;width:162.7px;height:32.4px;background:#fde4d7;border-radius:6px;"></div>
<div class="t" style="left:520.40px;top:1097.63px;font-size:16.5px;color:#1f2328;letter-spacing:0.427px;-webkit-text-stroke:0.25px #1f2328;">...LSMB West</div>
<svg class="s" style="left:637.5px;top:1099.2px;" width="17" height="14" viewBox="0 0 17 14"><path d="M1.5 7 H15 M9 1.5 L15 7 L9 12.5" fill="none" stroke="#e8590c" stroke-width="2.9" stroke-linecap="round" stroke-linejoin="round"/></svg>
<svg class="s" style="left:676.4px;top:1089.4px;" width="770" height="34" viewBox="0 0 770 34"><defs><clipPath id="rb"><rect x="0" y="0" width="769.6" height="33.6" rx="6"/></clipPath></defs><g clip-path="url(#rb)"><rect width="770" height="34" fill="#2563eb"/><path d="M0 0 H256.6 V8.6 H171 V16.8 H85.6 V25.2 H0 Z" fill="#7a9ff0"/></g></svg>
<div class="r" style="left:224px;top:1151.8px;width:1243px;height:2px;background:#e3e4e6;border-radius:0px;"></div>
<div class="t" style="left:799.70px;top:1167.63px;font-size:16.5px;color:#9ba0a5;letter-spacing:0.471px;">Collapse</div>
<svg class="s" style="left:874.7px;top:1172.5px;" width="12" height="9" viewBox="0 0 12 9"><path d="M1.5 6.5 L6 2 L10.5 6.5" fill="none" stroke="#6b7075" stroke-width="2" stroke-linecap="round" stroke-linejoin="round"/></svg>
<div class="r" style="left:222.5px;top:1234px;width:1245.5px;height:40px;background:#fff;border-radius:10px;border:1px solid #e1e3e6;box-sizing:border-box;"></div>
</body></html>
